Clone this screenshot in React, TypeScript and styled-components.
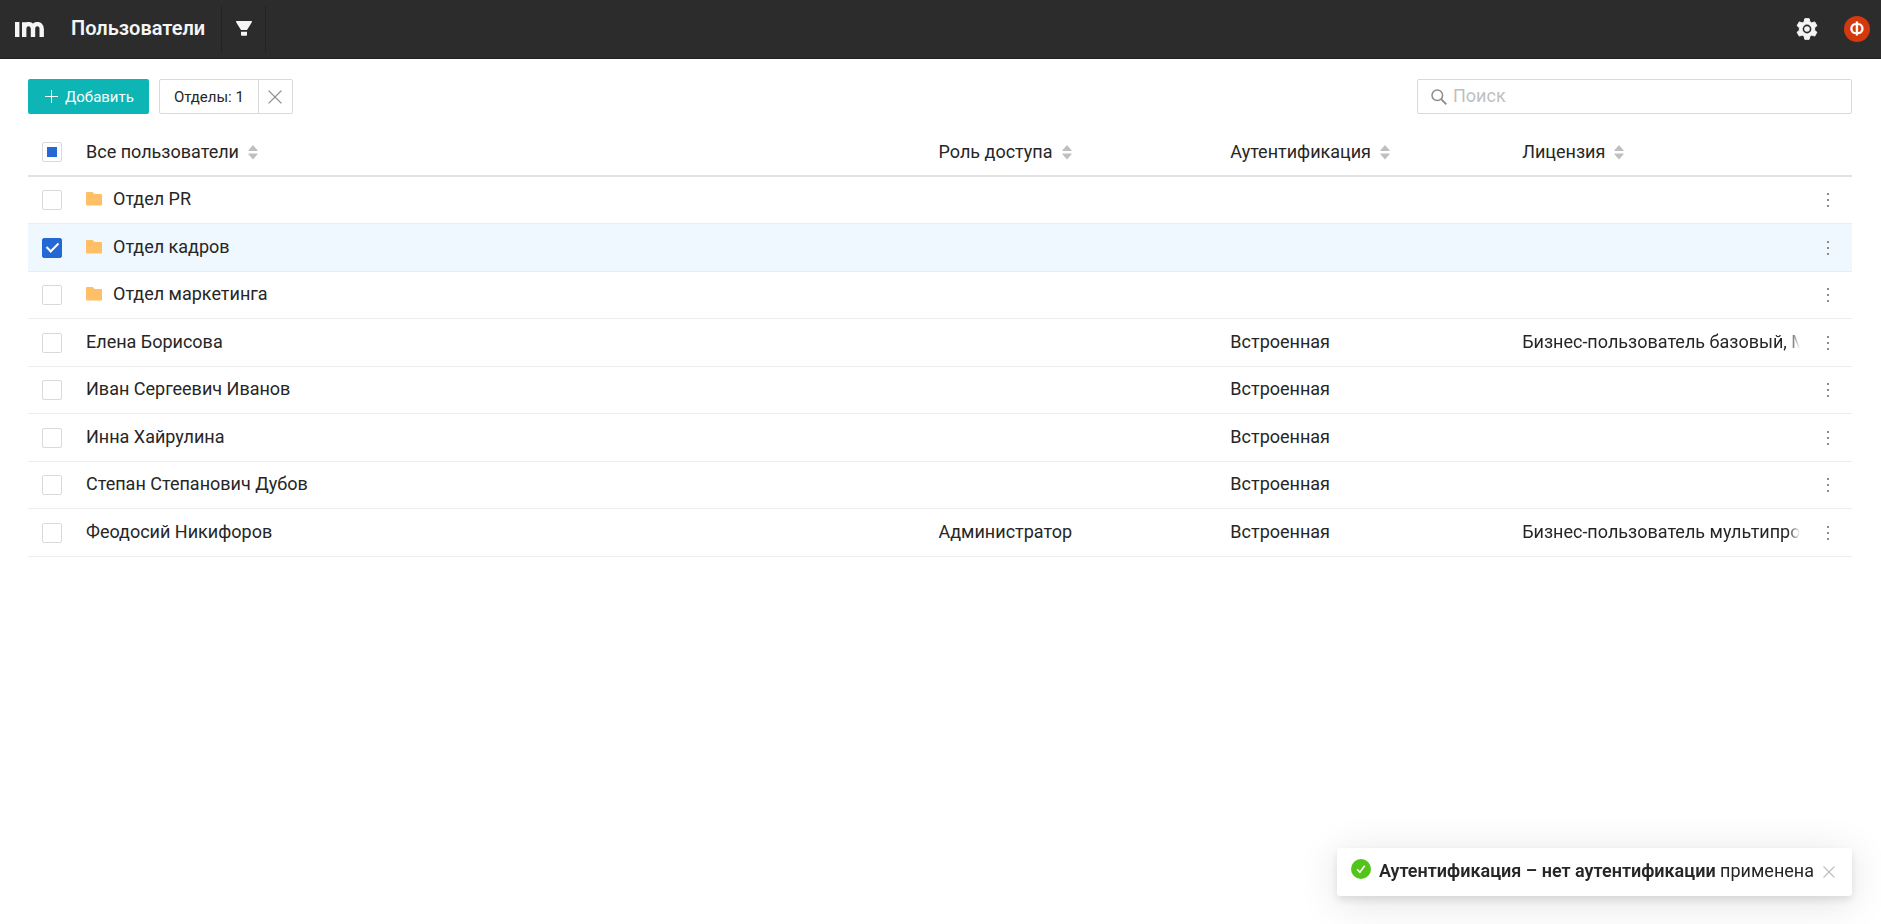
import React, { useEffect, useRef, useState } from "react";
import styled, { createGlobalStyle } from "styled-components";

const GlobalStyle = createGlobalStyle`
  *, *::before, *::after { box-sizing: border-box; }
  body {
    margin: 0;
    background: #fff;
    color: #262626;
    font-family: Roboto, "Liberation Sans", sans-serif;
    font-size: 18px;
    line-height: 24px;
  }
  button, input { font-family: inherit; }
`;

const Header = styled.header`
  display: flex;
  align-items: center;
  height: 59px;
  padding: 0 11px 0 15px;
  background: #2c2c2c;
  border-bottom: 1px solid #222;
  color: #f5f5f5;
`;

const LogoLink = styled.a`
  display: flex;
  margin-right: 27px;
  color: inherit;
`;

const Title = styled.h1`
  margin: 0 16px 0 0;
  padding-bottom: 2px;
  font-size: 20px;
  font-weight: 600;
  line-height: 24px;
`;

const IconButton = styled.button`
  display: flex;
  align-items: center;
  justify-content: center;
  padding: 0;
  border: 0;
  background: transparent;
  color: inherit;
  cursor: pointer;
`;

const FilterButton = styled(IconButton)`
  width: 45px;
  height: 46px;
  padding-bottom: 2px;
  border: solid #222;
  border-width: 0 1px;
`;

const HeaderActions = styled.div`
  display: flex;
  align-items: center;
  gap: 26px;
  margin-left: auto;
`;

const Avatar = styled.button`
  width: 26px;
  height: 26px;
  padding: 0;
  border: 0;
  border-radius: 50%;
  background: #d4380d;
  color: #fff;
  font-size: 18px;
  font-weight: 500;
  line-height: 26px;
  cursor: pointer;
`;

const Main = styled.main`
  padding: 20px 29px 20px 28px;
`;

const Toolbar = styled.div`
  display: flex;
  align-items: center;
  gap: 10px;
  margin-bottom: 15px;
`;

const AddButton = styled.button`
  display: flex;
  align-items: center;
  gap: 7px;
  height: 35px;
  padding: 0 15px 0 17px;
  border: 0;
  border-radius: 2px;
  background: #0eb5b5;
  color: #fff;
  font-size: 15px;
  cursor: pointer;
`;

const FilterTag = styled.div`
  display: flex;
  height: 35px;
  border: 1px solid #d9d9d9;
  border-radius: 2px;
`;

const TagLabel = styled.button`
  padding: 0 14px;
  border: 0;
  background: transparent;
  color: #262626;
  font-size: 15px;
  cursor: pointer;
`;

const TagClose = styled(IconButton)`
  width: 34px;
  border-left: 1px solid #d9d9d9;
  color: #8c8c8c;
`;

const SearchBox = styled.label`
  display: flex;
  align-items: center;
  gap: 6px;
  width: 435px;
  height: 35px;
  margin-left: auto;
  padding: 0 13px;
  border: 1px solid #d9d9d9;
  border-radius: 2px;
  color: #8c8c8c;
`;

const SearchInput = styled.input`
  flex: 1;
  min-width: 0;
  padding: 0 0 2px;
  border: 0;
  outline: 0;
  background: transparent;
  color: #262626;
  font-size: 18px;
  &::placeholder { color: #bfbfbf; opacity: 1; }
`;

const Table = styled.table`
  width: 100%;
  table-layout: fixed;
  border-collapse: separate;
  border-spacing: 0;
`;

const Col = styled.col<{ $width?: string }>`
  width: ${(p) => p.$width ?? "auto"};
`;

const HeadCell = styled.th`
  height: 48px;
  padding: 0 10px;
  border-bottom: 2px solid #e2e2e2;
  font-weight: 400;
  text-align: left;
`;

const SortButton = styled.button`
  display: flex;
  align-items: center;
  gap: 5px;
  padding: 0;
  border: 0;
  background: transparent;
  color: #262626;
  font-size: 18px;
  line-height: 24px;
  cursor: pointer;
`;

const Row = styled.tr<{ $selected: boolean }>`
  height: 47px;
  background: ${(p) => (p.$selected ? "#eff7ff" : "transparent")};
  &:nth-child(even) { height: 48px; }
`;

const Cell = styled.td`
  padding: 0 10px;
  border-bottom: 1px solid #ececec;
`;

const TextCell = styled(Cell)`
  padding: 0 4px 2px 10px;
`;

const CellText = styled.div`
  display: flex;
  align-items: center;
  gap: 11px;
  overflow: hidden;
  white-space: nowrap;
`;

const FadeText = styled.div`
  overflow: hidden;
  white-space: nowrap;
  mask-image: linear-gradient(to left, transparent, #000 12px);
`;

const Checkbox = styled.input`
  appearance: none;
  display: flex;
  align-items: center;
  justify-content: center;
  width: 20px;
  height: 20px;
  margin: 0 4px;
  border: 1px solid #d9d9d9;
  border-radius: 2px;
  background: #fff;
  cursor: pointer;
  &:checked {
    border-color: #2468d6;
    background: #2468d6;
  }
  &:checked::after {
    content: "";
    width: 7px;
    height: 12px;
    margin-bottom: 3px;
    border: solid #fff;
    border-width: 0 2px 2px 0;
    transform: rotate(45deg);
  }
  &:indeterminate::after {
    content: "";
    width: 10px;
    height: 10px;
    background: #2468d6;
  }
`;

const MoreButton = styled(IconButton)`
  width: 20px;
  height: 24px;
  margin: 0 4px;
  color: #8c8c8c;
`;

const Toast = styled.div`
  position: fixed;
  right: 29px;
  bottom: 28px;
  display: flex;
  align-items: center;
  height: 48px;
  padding: 0 15px 0 14px;
  border-radius: 3px;
  background: #fff;
  box-shadow: 0 4px 8px rgba(0, 0, 0, 0.1), 0 6px 40px rgba(0, 0, 0, 0.12);
`;

const ToastIcon = styled.span`
  display: flex;
  margin: 0 8px 6px 0;
`;

const ToastText = styled.p`
  margin: 0 7px 0 0;
  padding-bottom: 2px;
`;

const Strong = styled.strong`
  font-weight: 600;
`;

const ToastClose = styled(IconButton)`
  width: 16px;
  height: 16px;
  color: #bfbfbf;
`;

const Logo = () => (
  <svg width="29" height="15" viewBox="0 0 29 15" fill="none" stroke="currentColor" strokeWidth="4.400" aria-hidden="true">
    <path d="M2.200 0V15M9.200 .3V15M9.200 15V7C9.200 .5 18 .5 18 7V15M18 15V7C18 .5 26.700 .5 26.700 7V15" />
  </svg>
);

const FunnelIcon = () => (
  <svg width="16" height="15" viewBox="0 0 16 15" fill="currentColor" aria-hidden="true">
    <path d="M0 0h16c0 1-.3 1.800-.9 2.600L11 9H5L.9 2.600C.3 1.800 0 1 0 0zM5 10.700h6v3c0 .7-.3 1-1 1H6c-.7 0-1-.3-1-1z" />
  </svg>
);

const GearIcon = () => (
  <svg width="22" height="22" viewBox="0 0 22 22" aria-hidden="true">
    <path
      fill="currentColor"
      stroke="currentColor"
      strokeLinejoin="round"
      d="M8.800 .7h4.400l.6 3 2 1.200 2.900-1 2.200 3.800-2.300 2v2.600l2.300 2-2.200 3.800-2.900-1-2 1.200-.6 3H8.800l-.6-3-2-1.200-2.900 1-2.200-3.800 2.300-2V9.700l-2.300-2 2.200-3.800 2.900 1 2-1.200z"
    />
    <circle cx="11" cy="11" r="3.600" fill="none" stroke="#2c2c2c" strokeWidth="1.600" />
  </svg>
);

const PlusIcon = () => (
  <svg width="13" height="13" viewBox="0 0 13 13" stroke="currentColor" aria-hidden="true">
    <path d="M6.500 0V13M0 6.500H13" />
  </svg>
);

const CrossIcon = ({ size }: { size: number }) => (
  <svg width={size} height={size} viewBox="0 0 14 14" stroke="currentColor" strokeWidth="1.300" aria-hidden="true">
    <path d="M.6 .6L13.400 13.400M13.400 .6L.6 13.400" />
  </svg>
);

const SearchIcon = () => (
  <svg width="16" height="16" viewBox="0 0 16 16" fill="none" stroke="currentColor" strokeWidth="1.500" aria-hidden="true">
    <circle cx="6.300" cy="6.300" r="5.300" />
    <path d="M10.200 10.200L15.300 15.300" strokeWidth="1.900" />
  </svg>
);

const SortIcon = () => (
  <svg width="18" height="16" viewBox="0 0 18 16" fill="#bfbfbf" aria-hidden="true">
    <path d="M9 1l4.600 5.200c.2.400 0 .8-.4.800H4.800c-.4 0-.6-.4-.4-.8zM9 15.500l4.600-5.200c.2-.4 0-.8-.4-.8H4.800c-.4 0-.6.400-.4.800z" />
  </svg>
);

const FolderIcon = () => (
  <svg width="16" height="14" viewBox="0 0 16 14" fill="#ffbf66" aria-hidden="true">
    <path d="M1 0h5.500l2 2H15a1 1 0 0 1 1 1v9.500a1 1 0 0 1-1 1H1a1 1 0 0 1-1-1V1a1 1 0 0 1 1-1z" />
  </svg>
);

const DotsIcon = () => (
  <svg width="2" height="14" viewBox="0 0 2 14" fill="currentColor" aria-hidden="true">
    <path d="M0 0h2v2H0zM0 6h2v2H0zM0 12h2v2H0z" />
  </svg>
);

const SuccessIcon = () => (
  <svg width="20" height="20" viewBox="0 0 20 20" fill="none" aria-hidden="true">
    <circle cx="10" cy="10" r="10" fill="#52c41a" />
    <path d="M6.200 10.200L8.900 13.200L13.700 6.800" stroke="#fff" strokeWidth="1.500" />
  </svg>
);

interface Entry {
  name: string;
  folder?: boolean;
  role?: string;
  auth?: string;
  license?: string;
}

const entries: Entry[] = [
  { name: "Отдел PR", folder: true },
  { name: "Отдел кадров", folder: true },
  { name: "Отдел маркетинга", folder: true },
  { name: "Елена Борисова", auth: "Встроенная", license: "Бизнес-пользователь базовый, М" },
  { name: "Иван Сергеевич Иванов", auth: "Встроенная" },
  { name: "Инна Хайрулина", auth: "Встроенная" },
  { name: "Степан Степанович Дубов", auth: "Встроенная" },
  { name: "Феодосий Никифоров", role: "Администратор", auth: "Встроенная", license: "Бизнес-пользователь мультипро" },
];

const columns = ["Все пользователи", "Роль доступа", "Аутентификация", "Лицензия"];

export default function App() {
  const [selected, setSelected] = useState<string[]>(["Отдел кадров"]);
  const [toastOpen, setToastOpen] = useState(true);
  const allRef = useRef<HTMLInputElement>(null);
  const all = selected.length === entries.length;

  useEffect(() => {
    if (allRef.current) allRef.current.indeterminate = selected.length > 0 && !all;
  }, [selected, all]);

  const toggle = (name: string) =>
    setSelected((s) => (s.includes(name) ? s.filter((n) => n !== name) : [...s, name]));

  return (
    <>
      <GlobalStyle />
      <Header>
        <LogoLink href="#" aria-label="На главную"><Logo /></LogoLink>
        <Title>Пользователи</Title>
        <FilterButton aria-label="Фильтр"><FunnelIcon /></FilterButton>
        <HeaderActions>
          <IconButton aria-label="Настройки"><GearIcon /></IconButton>
          <Avatar>Ф</Avatar>
        </HeaderActions>
      </Header>
      <Main>
        <Toolbar>
          <AddButton><PlusIcon />Добавить</AddButton>
          <FilterTag>
            <TagLabel>Отделы: 1</TagLabel>
            <TagClose aria-label="Сбросить"><CrossIcon size={14} /></TagClose>
          </FilterTag>
          <SearchBox>
            <SearchIcon />
            <SearchInput type="text" placeholder="Поиск" aria-label="Поиск" />
          </SearchBox>
        </Toolbar>
        <Table>
          <colgroup>
            <Col $width="48px" />
            <Col />
            <Col $width="16%" />
            <Col $width="16%" />
            <Col $width="16%" />
            <Col $width="48px" />
          </colgroup>
          <thead>
            <tr>
              <HeadCell>
                <Checkbox
                  ref={allRef}
                  type="checkbox"
                  aria-label="Выбрать все"
                  checked={all}
                  onChange={() => setSelected(all ? [] : entries.map((e) => e.name))}
                />
              </HeadCell>
              {columns.map((c) => (
                <HeadCell key={c} scope="col">
                  <SortButton>{c}<SortIcon /></SortButton>
                </HeadCell>
              ))}
              <HeadCell />
            </tr>
          </thead>
          <tbody>
            {entries.map((e) => (
              <Row key={e.name} $selected={selected.includes(e.name)}>
                <Cell>
                  <Checkbox
                    type="checkbox"
                    aria-label={e.name}
                    checked={selected.includes(e.name)}
                    onChange={() => toggle(e.name)}
                  />
                </Cell>
                <TextCell><CellText>{e.folder && <FolderIcon />}{e.name}</CellText></TextCell>
                <TextCell>{e.role}</TextCell>
                <TextCell>{e.auth}</TextCell>
                <TextCell>{e.license && <FadeText>{e.license}</FadeText>}</TextCell>
                <Cell><MoreButton aria-label="Действия"><DotsIcon /></MoreButton></Cell>
              </Row>
            ))}
          </tbody>
        </Table>
      </Main>
      {toastOpen && (
        <Toast role="status">
          <ToastIcon><SuccessIcon /></ToastIcon>
          <ToastText><Strong>Аутентификация – нет аутентификации</Strong> применена</ToastText>
          <ToastClose aria-label="Закрыть" onClick={() => setToastOpen(false)}><CrossIcon size={12} /></ToastClose>
        </Toast>
      )}
    </>
  );
}
